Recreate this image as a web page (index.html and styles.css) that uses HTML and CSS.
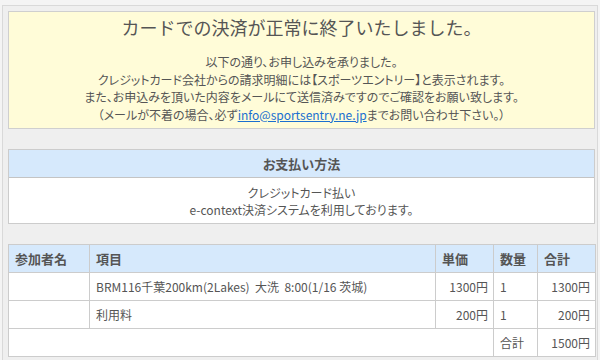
FILE: index.html
```html
<!DOCTYPE html>
<html lang="ja">
<head>
<meta charset="utf-8">
<link rel="stylesheet" href="styles.css">
</head>
<body>
<div class="wrap">
  <div class="notice">
    <h1 class="title">カードでの決済が正常に終了いたしました。</h1>
    <p class="msg">以下の通り、お申し込みを承りました。<br>
    クレジットカード会社からの請求明細には【スポーツエントリー】と表示されます。<br>
    また、お申込みを頂いた内容をメールにて送信済みですのでご確認をお願い致します。<br>
    （メールが不着の場合、必ず<a class="link" href="#">info@sportsentry.ne.jp</a>までお問い合わせ下さい。）</p>
  </div>

  <div class="pay">
    <div class="pay-head">お支払い方法</div>
    <div class="pay-body">クレジットカード払い<br>e-context決済システムを利用しております。</div>
  </div>

  <table class="items">
    <colgroup>
      <col class="c1"><col class="c2"><col class="c3"><col class="c4"><col class="c5">
    </colgroup>
    <thead>
      <tr><th>参加者名</th><th>項目</th><th>単価</th><th>数量</th><th>合計</th></tr>
    </thead>
    <tbody>
      <tr><td></td><td>BRM116千葉200km(2Lakes)&nbsp; 大洗&nbsp; 8:00(1/16 茨城)</td><td class="num">1300円</td><td>1</td><td class="num">1300円</td></tr>
      <tr><td></td><td>利用料</td><td class="num">200円</td><td>1</td><td class="num">200円</td></tr>
      <tr class="sum"><td colspan="3" class="blank"></td><td class="sum-label">合計</td><td class="num">1500円</td></tr>
    </tbody>
  </table>
</div>
</body>
</html>
```

FILE: styles.css
```css
html, body {
  margin: 0;
  padding: 0;
  background: #f4f4f4;
}
body {
  font-family: "Noto Sans CJK JP", "DejaVu Sans", sans-serif;
  color: #555;
  font-size: 12px;
  font-feature-settings: "palt";
}
.wrap {
  margin: 5px 2px 0 2px;
  border: 1px solid #d9d9d9;
  border-bottom: none;
  background: #efefef;
  padding: 5px 2px 0 5px;
  height: 360px;
  box-sizing: border-box;
}
.notice {
  background: #fffcd8;
  border: 1px solid #cfcfcf;
  padding: 2px 0 5px;
  text-align: center;
}
.title {
  margin: 0;
  font-size: 18px;
  font-weight: normal;
  line-height: 26px;
  color: #555;
  font-feature-settings: normal;
}
.msg {
  margin: 13px 0 0;
  line-height: 17.5px;
}
.link {
  color: #1a6fd0;
  text-decoration: underline;
}
.pay {
  margin-top: 20px;
  border: 1px solid #cccccc;
  background: #fff;
}
.pay-head {
  background: #d6e9fc;
  border-bottom: 1px solid #c4c4c4;
  text-align: center;
  font-weight: bold;
  font-size: 13px;
  line-height: 27px;
}
.pay-body {
  text-align: center;
  line-height: 17px;
  padding: 6px 0 5px;
}
.items {
  margin-top: 20px;
  width: 587px;
  border-collapse: collapse;
  table-layout: fixed;
  background: #fff;
}
.c1 { width: 81px; }
.c2 { width: 346px; }
.c3 { width: 58px; }
.c4 { width: 44px; }
.c5 { width: 58px; }
.items th, .items td {
  border: 1px solid #cccccc;
  height: 27px;
  padding: 0 6px;
  text-align: left;
  white-space: nowrap;
}
.items th {
  background: #d6e9fc;
  font-weight: bold;
  font-size: 13px;
}
.items td.num {
  text-align: right;
  padding-right: 5px;
}
```
